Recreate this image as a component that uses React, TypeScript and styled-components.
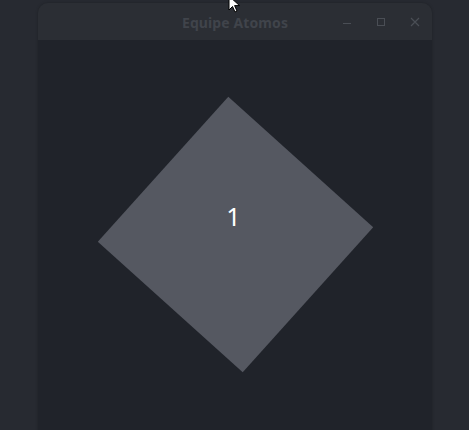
import React from "react";
import styled, { createGlobalStyle } from "styled-components";

const Global = createGlobalStyle`
  html, body { margin: 0; padding: 0; background: #272a31; overflow: hidden; }
  #root { width: 469px; height: 430px; }
`;

const Desktop = styled.div`
  position: relative;
  width: 469px;
  height: 430px;
  background: #272a31;
  overflow: hidden;
  padding: 3px 0 0 38px;
  box-sizing: border-box;
`;

const Window = styled.div`
  width: 394px;
  height: 460px;
  display: flex;
  flex-direction: column;
  border-radius: 10px 10px 0 0;
  overflow: hidden;
  box-shadow: 0 0 3px rgba(0, 0, 0, 0.25);
`;

const TitleBar = styled.div`
  height: 37px;
  flex: none;
  background: #2b2e34;
  display: grid;
  grid-template-columns: 1fr auto 1fr;
  align-items: center;
`;

const Title = styled.div`
  grid-column: 2;
  font-family: "Noto Sans", "DejaVu Sans", sans-serif;
  font-weight: 700;
  font-size: 14px;
  color: #40444b;
  letter-spacing: 0.1px;
  padding-top: 1px;
`;

const Controls = styled.div`
  grid-column: 3;
  justify-self: end;
  display: flex;
  align-items: center;
  gap: 18px;
  padding-right: 9px;
`;

const ControlButton = styled.div`
  width: 16px;
  height: 16px;
  display: flex;
  align-items: center;
  justify-content: center;
  color: #4a4e55;
`;

const Content = styled.div`
  flex: 1;
  background: #20232a;
  display: flex;
  justify-content: center;
  align-items: flex-start;
  padding-top: 97px;
  padding-left: 1px;
`;

const Diamond = styled.div`
  position: relative;
  width: 195px;
  height: 195px;
  display: flex;
  align-items: center;
  justify-content: center;
  &::before {
    content: "";
    position: absolute;
    inset: 0;
    background: #555861;
    transform: rotate(42deg);
  }
`;

const Label = styled.span`
  position: relative;
  font-family: "Noto Sans", "DejaVu Sans", sans-serif;
  font-size: 25px;
  color: #ffffff;
  padding-bottom: 38px;
  padding-right: 4px;
`;

const Cursor = styled.svg`
  position: absolute;
  left: 228px;
  top: -5px;
`;

export default function App() {
  return (
    <>
      <Global />
      <Desktop>
        <Window>
          <TitleBar>
            <Title>Equipe Atomos</Title>
            <Controls>
              <ControlButton>
                <svg width="10" height="10" viewBox="0 0 10 10">
                  <line x1="1" y1="6.5" x2="9" y2="6.5" stroke="currentColor" strokeWidth="1" />
                </svg>
              </ControlButton>
              <ControlButton>
                <svg width="10" height="10" viewBox="0 0 10 10">
                  <rect x="1.5" y="1.5" width="7" height="7" fill="none" stroke="currentColor" strokeWidth="1" />
                </svg>
              </ControlButton>
              <ControlButton>
                <svg width="10" height="10" viewBox="0 0 10 10">
                  <path d="M1 1 L9 9 M9 1 L1 9" stroke="currentColor" strokeWidth="1.2" />
                </svg>
              </ControlButton>
            </Controls>
          </TitleBar>
          <Content>
            <Diamond>
              <Label>1</Label>
            </Diamond>
          </Content>
        </Window>
        <Cursor width="14" height="20" viewBox="0 0 14 20">
          <path d="M1 1 L1 15 L4.5 11.5 L7 17 L9 16 L6.6 10.6 L11.5 10.6 Z" fill="#ffffff" stroke="#000000" strokeWidth="1" strokeLinejoin="round" />
        </Cursor>
      </Desktop>
    </>
  );
}
